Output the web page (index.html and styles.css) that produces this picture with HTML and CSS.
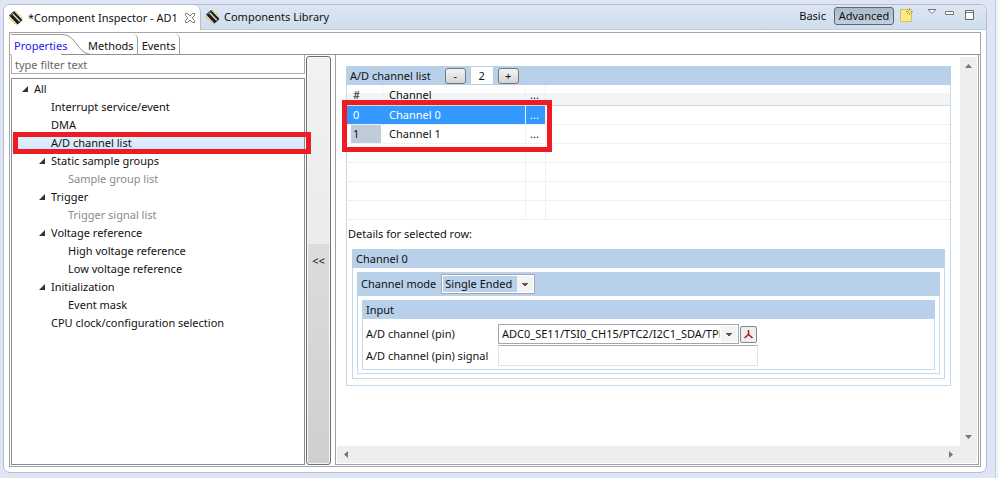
FILE: index.html
```
<!DOCTYPE html>
<html lang="en">
<head>
    <meta charset="UTF-8">
    <meta name="viewport" content="width=device-width, initial-scale=1.0">
    <title>Component Inspector - AD1</title>
    <link rel="stylesheet" href="styles.css">
</head>
<body>
    <svg class="defs" width="0" height="0">
        <symbol id="chip" viewBox="0 0 15 16">
            <path d="M1 5.500 L6 1 L14.500 10 L9.500 14.500 Z" fill="#1c1c1c"/>
            <path d="M.8 7.500 L8.800 15.300" stroke="#dcc62a" stroke-width="1.500" stroke-dasharray="1.500 1.100" fill="none"/>
            <path d="M7.500 1.300 L14.300 8.300" stroke="#dcc62a" stroke-width="1.300" stroke-dasharray="1.500 1.100" fill="none"/>
            <path d="M4.800 4 L11.800 11.300" stroke="#d4d4dc" stroke-width="1.500" fill="none"/>
            <path d="M2.500 5.500 L5.800 2.500" stroke="#888" fill="none"/>
        </symbol>
    </svg>

    <main class="view">
        <header class="view-header">
            <div class="view-tab active">
                <svg class="chip" width="15" height="16"><use href="#chip"/></svg>
                <span>*Component Inspector - AD1</span>
                <button class="close" aria-label="Close">
                    <svg width="10" height="10" viewBox="0 0 10 10"><path d="M.5 .5h2.200L5 3 7.300 .5h2.200v2L7.200 5l2.300 2.500v2H7.300L5 7 2.700 9.500H.5v-2L2.800 5 .5 2.500z" fill="#fff" stroke="#777"/></svg>
                </button>
            </div>
            <div class="view-tab">
                <svg class="chip" width="15" height="16"><use href="#chip"/></svg>
                <span>Components Library</span>
            </div>
            <div class="toolbar">
                <button class="mode">Basic</button>
                <button class="mode pressed">Advanced</button>
                <button class="tool" aria-label="New">
                    <svg width="14" height="14" viewBox="0 0 14 14"><path d="M.5 1.500h8l3 3v9H.5z" fill="#fbe98c" stroke="#d8c25a"/><path d="M9.500 0v7M6 3.500h7M7.200 1.200l4.600 4.600M11.800 1.200L7.200 5.800" stroke="#c99a35"/><circle cx="9.500" cy="3.500" r="1.200" fill="#fff3b0"/></svg>
                </button>
                <button class="tool menu" aria-label="View menu">
                    <svg width="10" height="14" viewBox="0 0 10 14"><path d="M1 1.500h8L5 5.500z" fill="#fff" stroke="#777"/></svg>
                </button>
                <button class="tool" aria-label="Minimize">
                    <svg width="10" height="14" viewBox="0 0 10 14"><path d="M.5 3.500h8v3h-8z" fill="#fff" stroke="#777"/></svg>
                </button>
                <button class="tool" aria-label="Maximize">
                    <svg width="10" height="14" viewBox="0 0 10 14"><path d="M.5 2.500h8v9h-8z" fill="#fff" stroke="#666"/><path d="M1 4.500h7" stroke="#777"/></svg>
                </button>
            </div>
        </header>

        <div class="inspector">
            <nav class="tabs">
                <button class="tab current">Properties</button>
                <svg class="curve" width="32" height="21" viewBox="0 0 32 21"><path d="M0 .5c9 0 12 5 16 10s7 10 16 10" fill="none" stroke="#909090"/></svg>
                <button class="tab">Methods</button>
                <button class="tab">Events</button>
            </nav>

            <div class="panes">
                <section class="side">
                    <input class="filter" type="text" placeholder="type filter text" aria-label="Filter">
                    <ul class="tree">
                        <li class="open">All</li>
                        <li class="l1">Interrupt service/event</li>
                        <li class="l1">DMA</li>
                        <li class="l1 selected">A/D channel list<div class="mark"></div></li>
                        <li class="l1 open">Static sample groups</li>
                        <li class="l2 off">Sample group list</li>
                        <li class="l1 open">Trigger</li>
                        <li class="l2 off">Trigger signal list</li>
                        <li class="l1 open">Voltage reference</li>
                        <li class="l2">High voltage reference</li>
                        <li class="l2">Low voltage reference</li>
                        <li class="l1 open">Initialization</li>
                        <li class="l2">Event mask</li>
                        <li class="l1">CPU clock/configuration selection</li>
                    </ul>
                </section>

                <button class="collapse">&lt;&lt;</button>

                <section class="editor">
                    <div class="content">
                        <div class="group">
                            <div class="bar">
                                <label for="count">A/D channel list</label>
                                <button class="step">-</button>
                                <input id="count" class="count" type="text" value="2">
                                <button class="step">+</button>
                            </div>
                            <div class="grid-wrap">
                                <table class="channels">
                                    <thead>
                                        <tr><th class="num">#</th><th class="name">Channel</th><th class="more">...</th><th></th></tr>
                                    </thead>
                                    <tbody>
                                        <tr class="picked"><td>0</td><td>Channel 0</td><td>...</td><td></td></tr>
                                        <tr class="second"><td><span>1</span></td><td>Channel 1</td><td>...</td><td></td></tr>
                                        <tr><td></td><td></td><td></td><td></td></tr>
                                        <tr><td></td><td></td><td></td><td></td></tr>
                                        <tr><td></td><td></td><td></td><td></td></tr>
                                        <tr><td></td><td></td><td></td><td></td></tr>
                                    </tbody>
                                </table>
                                <div class="mark"></div>
                            </div>

                            <p class="details">Details for selected row:</p>

                            <div class="group inner">
                                <div class="bar">Channel 0</div>
                                <div class="group nested">
                                    <div class="bar tall">
                                        <label for="mode">Channel mode</label>
                                        <div class="combo blue">
                                            <select id="mode"><option>Single Ended</option></select>
                                        </div>
                                    </div>
                                    <div class="group nested">
                                        <div class="bar">Input</div>
                                        <div class="fields">
                                            <label for="pin">A/D channel (pin)</label>
                                            <div class="pin-row">
                                                <div class="combo wide">
                                                    <select id="pin"><option>ADC0_SE11/TSI0_CH15/PTC2/I2C1_SDA/TPM0_CH1</option></select>
                                                </div>
                                                <button class="pin-button" aria-label="Pin routing">
                                                    <svg width="11" height="11" viewBox="0 0 11 11"><path d="M5.500 1v4.500M5.500 5.500L1.500 9M5.500 5.500L9.500 9" fill="none" stroke="#a01818" stroke-width="1.500"/></svg>
                                                </button>
                                            </div>
                                            <label for="signal">A/D channel (pin) signal</label>
                                            <input id="signal" class="signal" type="text">
                                        </div>
                                    </div>
                                </div>
                            </div>
                        </div>
                    </div>
                    <div class="vscroll"><i class="arrow up"></i><i class="arrow down"></i></div>
                    <div class="hscroll"><i class="arrow left"></i><i class="arrow right"></i></div>
                    <div class="corner"></div>
                </section>
            </div>
        </div>
    </main>
    <div class="next-view"></div>
</body>
</html>
```
FILE: styles.css
```
* {
    box-sizing: border-box;
}

body {
    margin: 0;
    min-height: 100vh;
    display: flex;
    background: #dfe5f4;
    font-family: "Noto Sans", "Open Sans", sans-serif;
    font-size: 11px;
    line-height: 18px;
    color: #111;
}

button, input, select {
    font: inherit;
    color: inherit;
    margin: 0;
    padding: 0;
}

button {
    background: none;
    border: none;
}

svg {
    display: block;
}

.defs {
    position: absolute;
}

.view {
    flex: 1;
    display: flex;
    flex-direction: column;
    margin: 4px 8px 5px 3px;
    border: 1px solid #b4bccd;
    border-radius: 7px;
    background: #fff;
    overflow: hidden;
}

.next-view {
    width: 4px;
    border-left: 1px solid #c4cce0;
    background: #f2f4fb;
}

/* view tabs and toolbar */
.view-header {
    display: flex;
    height: 25px;
    background: linear-gradient(#dce6f2, #cfdeec);
    border-bottom: 1px solid #c0cbdb;
}

.view-tab {
    display: flex;
    align-items: center;
    gap: 4px;
    padding-left: 4px;
    white-space: nowrap;
}

.view-tab.active {
    width: 197px;
    height: 25px;
    gap: 5px;
    background: #fff;
    border-right: 1px solid #b4bccd;
    border-radius: 0 7px 0 0;
}

.close {
    margin-left: auto;
    margin-right: 5px;
}

.toolbar {
    display: flex;
    align-items: flex-start;
    margin-left: auto;
    padding: 2px 6px 0 0;
}

.mode {
    height: 18px;
    line-height: 16px;
    margin-right: 8px;
}

.mode.pressed {
    width: 60px;
    border: 1px solid #5c6570;
    border-radius: 3px;
    background: linear-gradient(#a9bac9, #c0d0de);
    margin-right: 6px;
}

.tool {
    margin: 1px 5px 0;
}

.tool.menu {
    margin: 1px 3px 0 8px;
}

.mode + .tool {
    margin-left: 0;
}

/* inspector tabs */
.inspector {
    flex: 1;
    display: flex;
    flex-direction: column;
    margin: 2px 5px 5px;
    border: 1px solid #a4a4aa;
}

.tabs {
    display: flex;
    height: 22px;
    padding-top: 1px;
    border-bottom: 1px solid #909090;
}

.tab {
    height: 21px;
    padding: 2px 3px 0 4px;
    border-right: 1px solid #a0a0a0;
    border-radius: 0 5px 0 0;
}

.tab.current {
    height: 21px;
    width: 50px;
    margin-left: 1px;
    padding: 1px 0 0 3px;
    border: 0;
    border-top: 1px solid #a0a0a0;
    border-radius: 0;
    background: #fff;
    color: #1a1aee;
    white-space: nowrap;
}

.curve {
    margin-right: -9px;
}

/* panes */
.panes {
    flex: 1;
    display: flex;
    padding: 0 1px 1px;
}

.side {
    width: 294px;
    display: flex;
    flex-direction: column;
    gap: 4px;
}

.filter {
    height: 19px;
    border: 1px solid #a8abb3;
    border-top: 0;
    padding: 0 3px;
}

.filter::placeholder {
    color: #666;
    opacity: 1;
}

.tree {
    flex: 1;
    margin: 0;
    padding: 1px 0;
    list-style: none;
    border: 1px solid #868b96;
}

.tree li {
    position: relative;
    height: 18px;
    padding-left: 22px;
}

.tree .l1 {
    padding-left: 39px;
}

.tree .l2 {
    padding-left: 56px;
}

.tree .off {
    color: #8a8a8a;
}

.tree .selected {
    background: linear-gradient(#e6f2fd, #cfe4fa);
}

.tree .open::before {
    content: "";
    display: inline-block;
    width: 6px;
    height: 6px;
    margin: 0 6px 1px -12px;
    background: #333;
    clip-path: polygon(100% 0, 100% 100%, 0 100%);
}

.mark {
    position: absolute;
    border: 5px solid #ed1c24;
    z-index: 1;
}

.tree .mark {
    top: -2px;
    bottom: -2px;
    left: 1px;
    right: -7px;
}

.collapse {
    width: 25px;
    margin: 1px 4px 0 1px;
    border: 1px solid #707070;
    border-radius: 3px;
    box-shadow: inset 0 0 0 1px #f6f6f6;
    background: linear-gradient(#f2f2f2, #ebebeb 46%, #dcdcdc 46%, #cfcfcf);
}

/* editor area */
.editor {
    flex: 1;
    min-width: 0;
    display: grid;
    grid-template-columns: 1fr 17px;
    grid-template-rows: 1fr 17px;
    border: 1px solid #a0a0a6;
    border-top: 0;
    padding: 2px 1px 1px;
}

.content {
    min-width: 0;
    padding: 9px 9px 0;
}

.vscroll, .hscroll, .corner {
    background: #eee;
}

.vscroll, .hscroll {
    display: flex;
    justify-content: space-between;
    align-items: center;
}

.vscroll {
    flex-direction: column;
    padding: 7px 0;
}

.hscroll {
    padding: 0 7px;
}

.arrow {
    width: 7px;
    height: 4px;
    background: #777;
}

.up {
    clip-path: polygon(50% 0, 100% 100%, 0 100%);
}

.down {
    clip-path: polygon(0 0, 100% 0, 50% 100%);
}

.left, .right {
    width: 4px;
    height: 7px;
}

.left {
    clip-path: polygon(100% 0, 100% 100%, 0 50%);
}

.right {
    clip-path: polygon(0 0, 100% 50%, 0 100%);
}

.group {
    border: 1px solid #c3dbf2;
    border-top: 0;
    padding-bottom: 6px;
}

.inner {
    margin: 0 5px;
    padding-bottom: 4px;
}

.nested {
    margin: 4px 4px 0;
    padding-bottom: 3px;
}

.bar {
    display: flex;
    align-items: center;
    height: 19px;
    margin: 0 -1px;
    padding-left: 4px;
    background: #b9d0ea;
}

.bar.tall {
    height: 24px;
}

label {
    white-space: nowrap;
}

.step {
    width: 21px;
    height: 16px;
    line-height: 13px;
    border: 1px solid #777;
    border-radius: 3px;
    background: linear-gradient(#f4f4f4, #d4d4d4);
}

.bar label + .step {
    margin-left: 14px;
}

.count {
    width: 22px;
    height: 17px;
    margin: 0 5px;
    border: 0;
    background: #fff;
    text-align: center;
}

.grid-wrap {
    position: relative;
}

.grid-wrap .mark {
    top: 15px;
    left: -5px;
    width: 210px;
    height: 52px;
}

.channels {
    width: 100%;
    table-layout: fixed;
    border-collapse: separate;
    border-spacing: 0;
}

.channels th, .channels td {
    height: 19px;
    padding: 0 0 0 6px;
    line-height: 18px;
    text-align: left;
    font-weight: normal;
    border-right: 1px solid #f0f0f0;
    border-bottom: 1px solid #f0f0f0;
}

.channels th {
    height: 21px;
    background: linear-gradient(#fff 40%, #f3f4f5 40%);
    border-bottom-color: #d8d8d8;
}

.channels td:nth-child(1) {
    border-right-color: transparent;
}

.channels .num {
    width: 36px;
}

.channels .name {
    width: 143px;
}

.channels .more {
    width: 20px;
}

.channels th:nth-child(3), .channels td:nth-child(3) {
    padding-left: 4px;
}

.channels th:last-child, .channels td:last-child {
    border-right: 0;
}

.channels .picked td {
    color: #fff;
}

.channels .picked td:not(:last-child) {
    background: #3399ff;
}

.channels .second td:first-child {
    padding-left: 4px;
}

.second span {
    display: block;
    width: 30px;
    padding-left: 2px;
    background: #becbd8;
}

.details {
    margin: 5px 0 6px 1px;
}

.combo {
    position: relative;
    width: 94px;
    height: 20px;
    margin-left: 5px;
    border: 1px solid #a4a8ae;
    background: #fff;
    padding: 1px;
}

.combo select {
    display: block;
    width: 100%;
    height: 16px;
    padding: 0 17px 0 2px;
    border: 0;
    background: #fff;
    appearance: none;
    line-height: 16px;
}

.combo.blue select {
    background: #b9d0ea;
}

.combo.wide {
    width: 241px;
    margin: 0;
}

.combo::after {
    content: "";
    position: absolute;
    top: 1px;
    right: 1px;
    bottom: 1px;
    width: 16px;
    background:
        linear-gradient(#555, #555) 5px 7px / 6px 1px no-repeat,
        linear-gradient(#555, #555) 6px 8px / 4px 1px no-repeat,
        linear-gradient(#555, #555) 7px 9px / 2px 1px no-repeat,
        #f3f3f3;
    pointer-events: none;
}

.fields {
    display: grid;
    grid-template-columns: 132px 1fr;
    align-items: center;
    row-gap: 1px;
    padding: 5px 0 0 3px;
}

.pin-row {
    display: flex;
    align-items: center;
    gap: 1px;
}

.pin-button {
    width: 17px;
    height: 17px;
    padding: 2px;
    border: 1px solid #888;
    border-radius: 2px;
    background: #eee;
}

.signal {
    width: 260px;
    height: 21px;
    border: 1px solid #e2e3ea;
    border-top-color: #abadb3;
    background: #fff;
    padding: 0 3px;
}
```
